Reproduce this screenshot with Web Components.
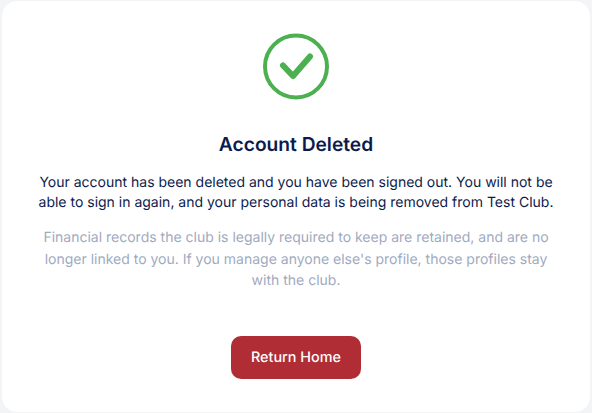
<!DOCTYPE html>
<html>
<head>
<meta charset="utf-8">
<style>
html, body { margin: 0; height: 100%; background: #f3f4f6; }
body { font-family: Inter, sans-serif; text-rendering: geometricPrecision; }
</style>
</head>
<body>
<deleted-card>
  <success-icon slot="icon"></success-icon>
  <span slot="title">Account Deleted</span>
  <span slot="message">Your account has been deleted and you have been signed out. You will not be able to sign in again, and your personal data is being removed from Test Club.</span>
  <span slot="note">Financial records the club is legally required to keep are retained, and are no longer linked to you. If you manage anyone else's profile, those profiles stay with the club.</span>
  <app-button slot="action">Return Home</app-button>
</deleted-card>
<script>
const cardTemplate = document.createElement("template");
cardTemplate.innerHTML = `
<style>
:host {
  display: block;
  box-sizing: border-box;
  height: 413px;
  padding: 0 1px;
  font-family: Inter, sans-serif;
}
.card {
  box-sizing: border-box;
  height: 100%;
  background: #fff;
  border: 1px solid #f3f4f6;
  border-radius: 16px;
  padding: 25px 32px 0;
  display: flex;
  flex-direction: column;
  align-items: center;
  text-align: center;
}
h2 {
  margin: 24px 0 0;
  font-size: 19.2px;
  line-height: 28px;
  font-weight: 600;
  color: #0d1b4c;
}
.message {
  margin: 15px 0 0;
  font-size: 14px;
  line-height: 20px;
  color: #0d1b4c;
}
.note {
  margin: 14px 0 0;
  font-size: 14px;
  line-height: 21.5px;
  color: #a0aac0;
}
.action { margin-top: 44px; }
</style>
<div class="card">
  <slot name="icon"></slot>
  <h2><slot name="title"></slot></h2>
  <p class="message"><slot name="message"></slot></p>
  <p class="note"><slot name="note"></slot></p>
  <div class="action"><slot name="action"></slot></div>
</div>
`;

class DeletedCard extends HTMLElement {
  constructor() {
    super();
    const shadow = this.attachShadow({ mode: "open" });
    shadow.append(cardTemplate.content.cloneNode(true));
  }
}

const iconTemplate = document.createElement("template");
iconTemplate.innerHTML = `
<style>
:host { display: block; width: 80px; height: 80px; }
svg { display: block; }
</style>
<svg width="80" height="80" viewBox="0 0 80 80" fill="none" stroke="#4caf50" stroke-linecap="round" stroke-linejoin="round">
  <circle cx="40" cy="40.5" r="31" stroke-width="4"></circle>
  <path d="M27 39.5 L37 50 L54 30.5" stroke-width="6"></path>
</svg>
`;

class SuccessIcon extends HTMLElement {
  constructor() {
    super();
    const shadow = this.attachShadow({ mode: "open" });
    shadow.append(iconTemplate.content.cloneNode(true));
  }
}

const buttonTemplate = document.createElement("template");
buttonTemplate.innerHTML = `
<style>
:host { display: inline-block; }
button {
  display: block;
  height: 43px;
  padding: 2px 20px 0;
  border: 0;
  border-radius: 10px;
  background: #b02d35;
  color: #fff;
  font: 500 14.4px/20px Inter, sans-serif;
  text-rendering: geometricPrecision;
}
</style>
<button><slot></slot></button>
`;

class AppButton extends HTMLElement {
  constructor() {
    super();
    const shadow = this.attachShadow({ mode: "open" });
    shadow.append(buttonTemplate.content.cloneNode(true));
  }
}

customElements.define("deleted-card", DeletedCard);
customElements.define("success-icon", SuccessIcon);
customElements.define("app-button", AppButton);
</script>
</body>
</html>
